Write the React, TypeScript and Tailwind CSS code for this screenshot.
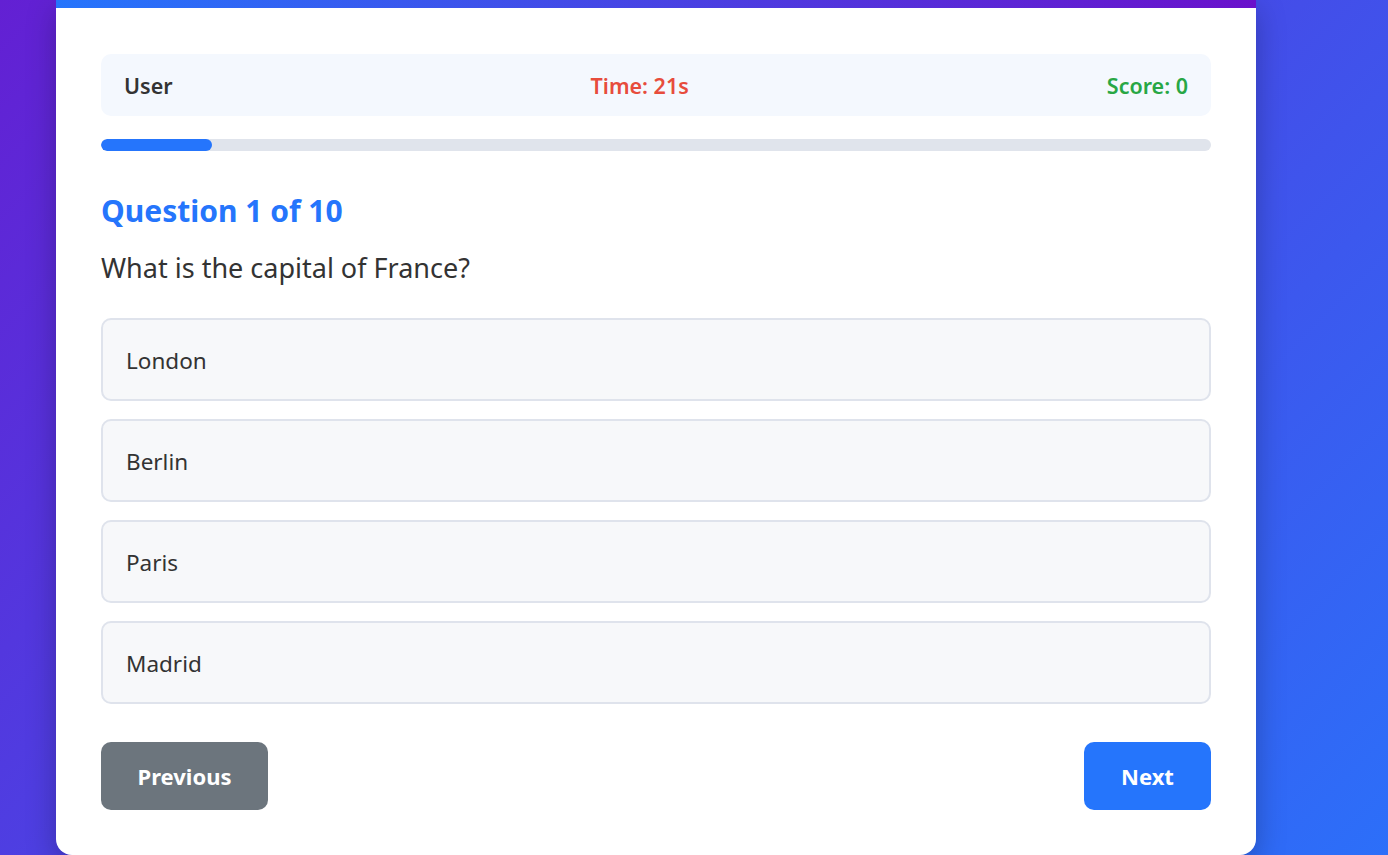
import React from 'react';

const options = ['London', 'Berlin', 'Paris', 'Madrid'];

export default function App() {
  return (
    <div
      className="h-[855px] overflow-hidden bg-[linear-gradient(135deg,#6320d3,#2c6ff9)] text-[#333]"
      style={{ fontFamily: '"Noto Sans", "Open Sans", sans-serif' }}
    >
      <div className="ml-[56px] w-[1200px] h-[855px] bg-white rounded-b-[16px] shadow-[0_10px_30px_rgba(0,0,0,0.25)] flex flex-col">
        {/* top accent */}
        <div className="h-[8px] bg-[linear-gradient(90deg,#2575fc,#6a11cb)]" />

        <div className="px-[45px] pt-[46px] flex flex-col">
          {/* info bar */}
          <div className="h-[62px] rounded-[10px] bg-[#f4f8fe] px-[23px] pt-[3px] flex justify-between items-center text-[21.5px] font-semibold">
            <span className="text-[#333]">User</span>
            <span className="text-[#e74c3c]">Time: 21s</span>
            <span className="text-[#28a745]">Score: 0</span>
          </div>

          {/* progress */}
          <div className="mt-[23px] h-[12px] rounded-full bg-[#e0e4ec] overflow-hidden">
            <div className="h-full w-[10%] rounded-full bg-[#2575fc]" />
          </div>

          <h2 className="mt-[40px] text-[30px] leading-[40px] font-bold text-[#2575fc]">Question 1 of 10</h2>
          <p className="mt-[18px] text-[27px] leading-[38px] text-[#333]">What is the capital of France?</p>

          <div className="mt-[31px] flex flex-col gap-[18px]">
            {options.map((o) => (
              <button
                key={o}
                className="h-[83px] w-full text-left rounded-[10px] border-2 border-[#dfe3ec] bg-[#f7f8fa] px-[23px] pt-[3px] text-[22.5px] text-[#333]"
              >
                {o}
              </button>
            ))}
          </div>

          <div className="mt-[38px] flex justify-between">
            <button className="h-[68px] w-[167px] rounded-[10px] bg-[#6c757d] text-white text-[22px] font-bold">
              Previous
            </button>
            <button className="h-[68px] w-[127px] rounded-[10px] bg-[#2575fc] text-white text-[22px] font-bold">
              Next
            </button>
          </div>
        </div>
      </div>
    </div>
  );
}
